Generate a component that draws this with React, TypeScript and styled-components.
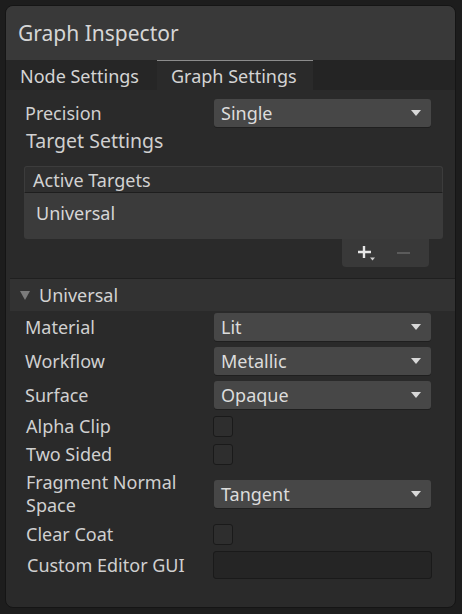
import React from "react";
import styled, { createGlobalStyle } from "styled-components";

const GlobalStyle = createGlobalStyle`
  html, body { margin: 0; padding: 0; background: #1d1d1d; }
  body { font-family: "Noto Sans", "Open Sans", sans-serif; color: #d2d2d2; }
  * { box-sizing: border-box; }
`;

const Panel = styled.div`
  margin: 5px 0 0 5px;
  width: 451px;
  height: 603px;
  border: 1px solid #151515;
  border-radius: 8px;
  overflow: hidden;
  background: #2a2a2a;
  display: flex;
  flex-direction: column;
`;

const Header = styled.div`
  height: 54px;
  display: flex;
  align-items: center;
  padding-left: 12px;
  font-size: 21px;
  background: #393939;
  color: #d6d6d6;
`;

const TabBar = styled.div`
  height: 30px;
  display: flex;
  background: #242424;
`;

const Tab = styled.div<{ $w: number; $active?: boolean }>`
  width: ${(p) => p.$w}px;
  padding-left: 14px;
  display: flex;
  align-items: center;
  font-size: 18px;
  background: ${(p) => (p.$active ? "#2a2a2a" : "#262626")};
  border-top: 1px solid ${(p) => (p.$active ? "#8c8c8c" : "transparent")};
  color: #d4d4d4;
`;

const Section = styled.div<{ $pl: number; $pt?: number }>`
  padding-left: ${(p) => p.$pl}px;
  padding-top: ${(p) => p.$pt ?? 0}px;
  display: flex;
  flex-direction: column;
`;

const Rows = styled.div`
  display: flex;
  flex-direction: column;
  gap: 6px;
  padding-left: 19px;
  padding-top: 2px;
`;

const Row = styled.div<{ $h: number }>`
  height: ${(p) => p.$h}px;
  display: grid;
  grid-template-columns: 189px 217px;
  align-items: center;
`;

const Label = styled.div<{ $indent?: number }>`
  font-size: 18px;
  line-height: 23px;
  padding-left: ${(p) => p.$indent ?? 0}px;
  color: #d0d0d0;
`;

const Heading = styled.div`
  font-size: 19.5px;
  height: 28px;
  line-height: 28px;
  margin-left: 1px;
  color: #d0d0d0;
`;

const Dropdown = styled.div`
  height: 28px;
  background: #474747;
  border-radius: 3px;
  display: flex;
  align-items: center;
  justify-content: space-between;
  padding: 0 10px 0 7px;
  font-size: 18px;
  color: #dcdcdc;
  box-shadow: 0 1px 0 #1f1f1f;
`;

const Arrow = styled.span`
  width: 0;
  height: 0;
  border-left: 5px solid transparent;
  border-right: 5px solid transparent;
  border-top: 6px solid #d8d8d8;
`;

const Checkbox = styled.div`
  width: 20px;
  height: 21px;
  margin-left: -1px;
  background: #2e2e2e;
  border: 1px solid #1a1a1a;
  border-radius: 3px;
`;

const TextField = styled.div`
  height: 28px;
  margin-left: -1px;
  width: 219px;
  background: #252525;
  border: 1px solid #1a1a1a;
  border-radius: 3px;
`;

const List = styled.div`
  margin: 11px 0 0 -1px;
  width: 419px;
  display: flex;
  flex-direction: column;
`;

const ListHeader = styled.div`
  height: 27px;
  background: #2f2f2f;
  border: 1px solid #3c3c3c;
  border-bottom: 1px solid #1e1e1e;
  border-radius: 3px 3px 0 0;
  padding-left: 8px;
  display: flex;
  align-items: center;
  font-size: 18px;
  color: #d2d2d2;
`;

const ListBody = styled.div`
  height: 46px;
  background: #3b3b3b;
  border-radius: 0 0 3px 3px;
  padding-left: 12px;
  padding-top: 8px;
  font-size: 18px;
  color: #d6d6d6;
`;

const ListFooter = styled.div`
  align-self: flex-end;
  margin-right: 14px;
  width: 87px;
  height: 28px;
  background: #393939;
  border-radius: 0 0 4px 4px;
  display: flex;
  align-items: center;
  padding-left: 15px;
  gap: 22px;
`;

const Foldout = styled.div`
  margin: 11px 0 0 4px;
  height: 33px;
  background: #323232;
  border-top: 1px solid #1f1f1f;
  display: flex;
  align-items: center;
  padding-left: 10px;
  gap: 9px;
  font-size: 18px;
  color: #d2d2d2;
`;

const FoldTri = styled.span`
  width: 0;
  height: 0;
  border-left: 5px solid transparent;
  border-right: 5px solid transparent;
  border-top: 9px solid #7c7c7c;
`;

const PlusIcon = () => (
  <svg width="18" height="16" viewBox="0 0 18 16">
    <path d="M7 1v12M1 7h13" stroke="#e6e6e6" strokeWidth="2.4" fill="none" />
    <path d="M13 12.5h5l-2.5 3z" fill="#d0d0d0" />
  </svg>
);

const MinusIcon = () => (
  <svg width="13" height="4" viewBox="0 0 13 4">
    <path d="M0 2h13" stroke="#7e7e7e" strokeWidth="1.2" />
  </svg>
);

const DropRow = ({ label, value }: { label: string; value: string }) => (
  <Row $h={28}>
    <Label>{label}</Label>
    <Dropdown>
      {value}
      <Arrow />
    </Dropdown>
  </Row>
);

const CheckRow = ({ label }: { label: string }) => (
  <Row $h={22}>
    <Label $indent={1}>{label}</Label>
    <Checkbox />
  </Row>
);

export default function App() {
  return (
    <>
      <GlobalStyle />
      <Panel>
        <Header>Graph Inspector</Header>
        <TabBar>
          <Tab $w={151}>Node Settings</Tab>
          <Tab $w={156} $active>
            Graph Settings
          </Tab>
        </TabBar>
        <Section $pl={19} $pt={9}>
          <Row $h={28}>
            <Label>Precision</Label>
            <Dropdown>
              Single
              <Arrow />
            </Dropdown>
          </Row>
          <Heading>Target Settings</Heading>
          <List>
            <ListHeader>Active Targets</ListHeader>
            <ListBody>Universal</ListBody>
            <ListFooter>
              <PlusIcon />
              <MinusIcon />
            </ListFooter>
          </List>
        </Section>
        <Foldout>
          <FoldTri />
          Universal
        </Foldout>
        <Rows>
          <DropRow label="Material" value="Lit" />
          <DropRow label="Workflow" value="Metallic" />
          <DropRow label="Surface" value="Opaque" />
          <CheckRow label="Alpha Clip" />
          <CheckRow label="Two Sided" />
          <Row $h={46}>
            <Label $indent={1}>
              Fragment Normal
              <br />
              Space
            </Label>
            <Dropdown>
              Tangent
              <Arrow />
            </Dropdown>
          </Row>
          <CheckRow label="Clear Coat" />
          <Row $h={28}>
            <Label $indent={2}>Custom Editor GUI</Label>
            <TextField />
          </Row>
        </Rows>
      </Panel>
    </>
  );
}
